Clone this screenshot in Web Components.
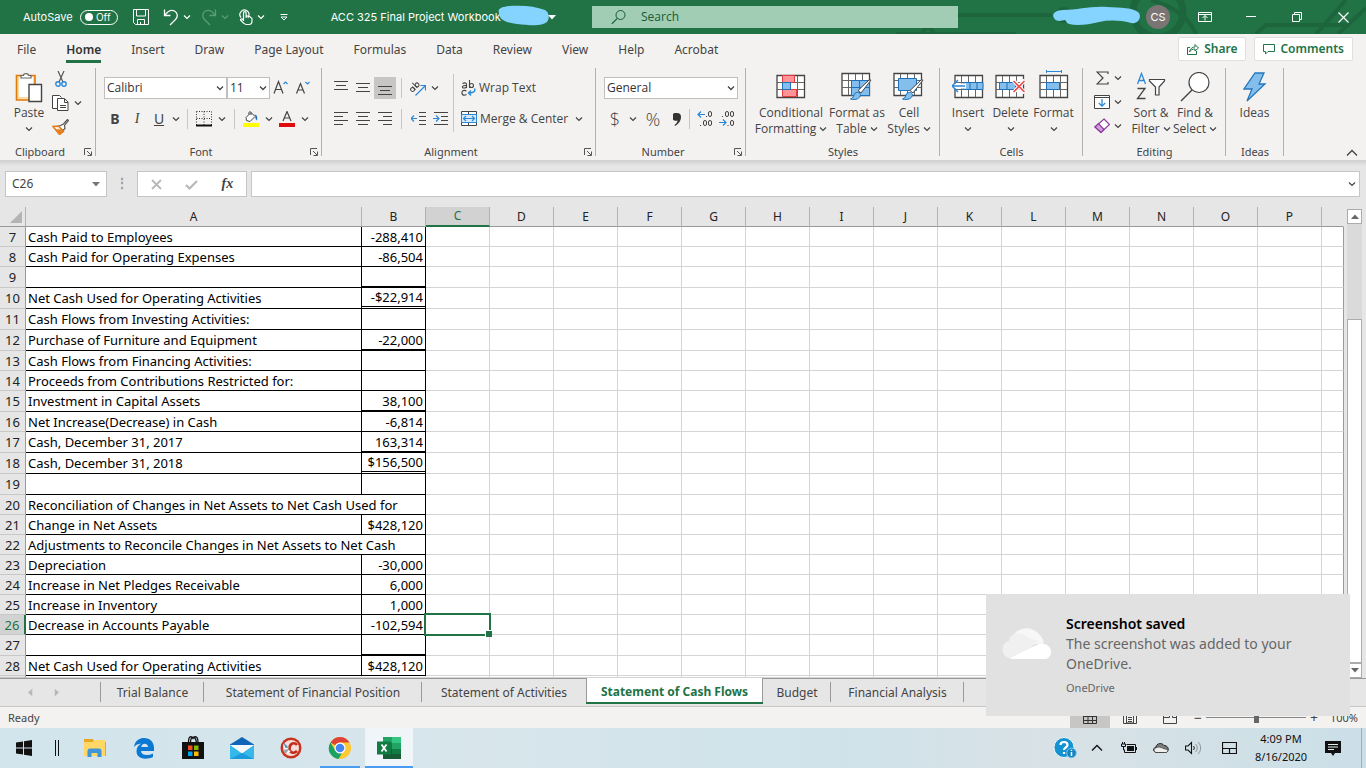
<!DOCTYPE html>
<html lang="en">
<head>
<meta charset="utf-8">
<title>ACC 325 Final Project Workbook - Excel</title>
<style>
html,body{margin:0;height:100%}
body{display:flex;flex-direction:column;min-height:100vh;overflow:hidden;background:#e6e6e6;color:#444;font:12px/16px "Noto Sans","Open Sans",sans-serif}
</style>
</head>
<body>
<excel-titlebar></excel-titlebar>
<excel-menu></excel-menu>
<excel-ribbon></excel-ribbon>
<formula-bar></formula-bar>
<work-sheet></work-sheet>
<sheet-tabs></sheet-tabs>
<status-bar></status-bar>
<task-bar></task-bar>
<toast-card>
  <span slot="title">Screenshot saved</span>
  <span slot="body">The screenshot was added to your OneDrive.</span>
  <span slot="source">OneDrive</span>
</toast-card>
<script>
const K='stroke="#444" fill="none"', B='stroke="#2b88d8" fill="none"';
const lines=(a)=>a.map(([x1,x2,y])=>`<path d="M${x1} ${y}.5H${x2}" ${K}/>`).join('');
const gridBase='<path d="M1 1.5H28.5V23.5H1z" fill="#fff" stroke="#444" stroke-width="1.3"/><path d="M1 8.5H28M1 15.5H28M7.5 2V23M14.500 2V23M21.500 2V23" stroke="#666" fill="none"/>';
const brush='<path d="M30 8L20 21l-3-2.500L28 8z" fill="#fff" stroke="#444"/><path d="M19.500 22.500c0 4-5 6-10 4.500 3-1 3-3 4-5 1.500-2.500 5-2 6 .5z" fill="#83beec" stroke="#1e71b8"/>';
const ICONS={
chev:[8,6,'<path d="M1 1.500l3 3 3-3" fill="none" stroke="currentColor" stroke-width="1.200"/>'],
up:[12,8,'<path d="M1 6.500l5-5 5 5" fill="none" stroke="currentColor" stroke-width="1.300"/>'],
save:[18,18,'<path d="M1.500 1.500h15v15h-13l-2-2zM4.500 2v6h9V2M5.500 16.500v-5h7v5M8.500 16v-2" fill="none" stroke="#fff"/>'],
undo:[18,18,'<path d="M2.500 1.500v6h6M3 7C6 3 9.500 1.500 12.500 3c3.500 2 3.500 6 1 8.500L8 17" fill="none" stroke="#fff" stroke-width="1.300"/>'],
redo:[18,18,'<path d="M15.500 1.500v6h-6M15 7C12 3 8.500 1.500 5.500 3 2 5 2 9 4.500 11.500L10 17" fill="none" stroke="#5c9c78" stroke-width="1.300"/>'],
touch:[16,18,'<path d="M3 9.500a4.500 4.500 0 1 1 7.500-1M5.500 13V5a1.300 1.300 0 0 1 2.600 0v5M8.100 8.500a1.200 1.200 0 0 1 2.200.5 1.200 1.200 0 0 1 2.200.5c1 0 1.500.5 1.500 1.500v2c0 2-1 3.500-3 3.500H8c-2 0-3-2-5.500-4.500 0-1.500 2-1.500 3 .5" fill="none" stroke="#fff" stroke-width="1.200"/>'],
custom:[8,8,'<path d="M.5 1.500h7M1 4l3 3 3-3z" stroke="#fff" fill="none" stroke-width="1"/>'],
tri:[8,5,'<path d="M0 0h8L4 4.500z" fill="currentColor"/>'],
search:[16,16,'<circle cx="9.500" cy="6" r="4.500" fill="none" stroke="#185c37"/><path d="M6.300 9.300L.8 14.800" stroke="#185c37" stroke-width="1.200"/>'],
rdisp:[14,12,'<path d="M.5 1.500h13v9H.5zM.5 3.500h13M7 9.500v-5M4.500 7L7 4.500 9.500 7" fill="none" stroke="#fff"/>'],
min:[10,2,'<path d="M0 .5h10" stroke="#fff"/>'],
restore:[10,10,'<path d="M.5 2.500h7v7h-7zM2.500 2V.5h7v7H8" fill="none" stroke="#fff"/>'],
close:[11,11,'<path d="M.5.5l10 10M10.500.5l-10 10" stroke="#fff" stroke-width="1.200"/>'],
share:[12,12,'<path d="M3 4.500H.5v7h9V8M2.500 9c.5-3.500 3-5 5.500-5V1.500L11.500 5 8 8V6C5.500 6 3.500 7 2.500 9z" fill="none" stroke="#217346"/>'],
comment:[12,12,'<path d="M.5 1.500h11v7H5L2.500 11V8.500h-2z" fill="none" stroke="#217346"/>'],
paste:[28,32,'<path d="M1.500 4.500H20V29H1.500z" fill="#fcdca0" stroke="#df7a0f" stroke-width="1.600"/><path d="M4 6h14v20H4z" fill="#fff"/><path d="M6 7V4.500h2.500C8.500 2 13.500 2 13.500 4.500H16V7z" fill="#fff" stroke="#666" stroke-width="1.200"/><path d="M14 13.500h12.500v17H14z" fill="#fff" stroke="#444" stroke-width="1.400"/>'],
cut:[12,16,'<path d="M3 0l5 11M9 0L4 11" stroke="#555" fill="none" stroke-width="1.200"/><circle cx="3" cy="13" r="2.200" fill="none" stroke="#2b88d8" stroke-width="1.400"/><circle cx="9" cy="13" r="2.200" fill="none" stroke="#2b88d8" stroke-width="1.400"/>'],
copy:[17,16,'<path d="M5.500 13.500h-5V.5h7l2 2" fill="#fff" stroke="#444"/><path d="M5.500 3.500h7l3.500 3.500v8.500H5.500zM12.500 4v3.500H16M8 10.500h6M8 12.500h6" fill="#fff" stroke="#444"/>'],
painter:[17,16,'<path d="M8.500 6.500l3-1.500 4-4.500 1 1-4 5 .5 3-2 2-5-4z" fill="#fff" stroke="#555" stroke-width="1.200"/><path d="M1 7.500l5.500-.5 5 5.500-4 3z" fill="#fff3e0" stroke="#e07a1a" stroke-width="1.500"/><path d="M4 10l5 .5 2.500 2-4 3z" fill="#e8801f"/>'],
launch:[8,8,'<path d="M.5 7V.5H7M3 3l4 4M7.500 3.500v4h-4" fill="none" stroke="#555"/>'],
borders:[16,16,'<path d="M.5.5h15M.5.5v14M15.500.5v14M8 .5v14M.5 7.500h15" stroke="#333" stroke-dasharray="1 1.500" fill="none"/><path d="M0 14.500h16" stroke="#111" stroke-width="2"/>'],
fill:[16,16,'<path d="M3 6.500l5-5 4 4-5 5-3.500-1zM6 3.500C5 1 7 0 8 1.500V4" fill="#fff" stroke="#444"/><path d="M11.500 3.500c3 .5 3 3 2.500 6-1.500-1-2-3-1.500-4z" fill="#1e71b8"/><path d="M0 12h16v4H0z" fill="#ff0"/>'],
fcolor:[16,16,'<path d="M4 10L8 .5 12 10M5.500 7h5" fill="none" stroke="#444" stroke-width="1.200"/><path d="M0 12h16v4H0z" fill="#e00b0b"/>'],
grow:[16,16,'<path d="M1 13.500L5.500 1.500 10 13.500M2.500 9.500h6" fill="none" stroke="#444" stroke-width="1.200"/><path d="M10.500 4l2-2 2 2" '+B+' stroke-width="1.200"/>'],
shrink:[16,16,'<path d="M1.500 13.500L5.500 3.500 9.500 13.500M3 10h5" fill="none" stroke="#444" stroke-width="1.200"/><path d="M10.500 2l2 2 2-2" '+B+' stroke-width="1.200"/>'],
top:[14,16,lines([[0,14,1],[2,12,5],[0,14,9]])],
mid:[14,16,lines([[0,14,3],[2,12,7],[0,14,11]])],
bot:[14,16,lines([[0,14,6],[2,12,10],[0,14,14]])],
left:[14,16,lines([[0,14,1],[0,9,5],[0,14,9],[0,9,13]])],
center:[14,16,lines([[0,14,1],[2,12,5],[0,14,9],[2,12,13]])],
right:[14,16,lines([[0,14,1],[5,14,5],[0,14,9],[5,14,13]])],
orient:[16,16,'<g transform="rotate(-45 5 7)"><ellipse cx="1.500" cy="7" rx="1.800" ry="2" '+K+'/><path d="M3.500 4.800v4.500M6 2v7.300" '+K+'/><ellipse cx="8" cy="7" rx="1.800" ry="2" '+K+'/></g><path d="M5.500 15.500L15 6M10.500 5.500h5v5" '+B+' stroke-width="1.200"/>'],
outdent:[15,16,lines([[8,15,1],[8,15,5],[8,15,9],[8,15,13]])+'<path d="M0 7.500h6M3 4.500l-3 3 3 3" '+B+' stroke-width="1.200"/>'],
indent:[15,16,lines([[1,15,1],[8,15,5],[8,15,9],[1,15,13]])+'<path d="M0 7.500h6M3 4.500l3 3-3 3" '+B+' stroke-width="1.200"/>'],
wrap:[15,16,'<g '+K+' stroke-width="1.100"><path d="M1.500 3.500c3-1.500 4 0 4 1v3.500M5.500 5.500c-5-.3-5 2.500-2.500 2.500 1.500 0 2.500-1 2.500-1.500M8.500 0v8"/><circle cx="10.500" cy="5.500" r="2"/><path d="M5.500 11c-3-1.500-5 0-4.500 2.500.5 2 2.500 2 4.500 1"/></g><path d="M13.500 8.500c1.500 3-1.500 4.500-6 4.500M10 10.500L7.500 13l2.500 2.500" '+B+' stroke-width="1.400"/>'],
merge:[16,16,'<path d="M.5.5h15v14H.5zM7.500.5v3M7.500 12v3" fill="#fff" stroke="#444"/><path d="M.5 3.500h15v8H.5z" fill="#d8ebfa" stroke="#2b88d8"/><path d="M2.500 7.500h11M5 5L2.500 7.500 5 10M11 5l2.500 2.500L11 10" '+B+' stroke-width="1.200"/>'],
cond:[30,26,gridBase+'<path d="M6.500 1.500h12v7h-12zM6.500 15.500h14v7h-14z" fill="#ff9596" stroke="#e03a3e"/><path d="M6.500 8.500h8v7h-8z" fill="#83beec" stroke="#1e71b8"/>'],
table:[32,30,gridBase+'<path d="M10.500 8.500h18v15h-18z" fill="#83beec" stroke="#1e71b8"/><path d="M10 15.500h18M18.500 8v15" stroke="#1e71b8"/>'+brush],
cell:[32,30,gridBase+'<path d="M5.500 6.500h18v12h-18z" fill="#83beec" stroke="#1e71b8"/>'+brush],
insert:[32,26,'<g transform="translate(2)">'+gridBase+'</g><path d="M11 8.500h20v7H11zM18 8v7M25 8v7" fill="#83beec" stroke="#1e71b8"/><path d="M0 12h14" stroke="#fff" stroke-width="5"/><path d="M0 12h13M6 6l-6 6 6 6" '+B+' stroke-width="1.500"/>'],
del:[32,26,gridBase+'<path d="M4.500 8.500h16v7h-16zM12 8v7" fill="#83beec" stroke="#1e71b8"/><path d="M18 6l12 13M30 6L18 19" stroke="#fff" stroke-width="4"/><path d="M18.500 7l11 11M29.500 7l-11 11" stroke="#f04a4a" stroke-width="1.600"/>'],
format:[30,34,'<g transform="translate(0 4)">'+gridBase+'<path d="M7.500 8.500h13v7h-13z" fill="#83beec" stroke="#1e71b8"/></g><path d="M7.500 0v3M22.500 0v3M7 1.500h16" stroke="#2b88d8" fill="none"/>'],
sum:[13,14,'<path d="M12 3V1H1l6 6-6 6h11v-2" '+K+' stroke-width="1.200"/>'],
filldown:[16,14,'<path d="M.5.5h15v13H.5zM.5 2.500h15" fill="#fff" stroke="#444"/><path d="M8 4v7M4.800 8L8 11.200 11.200 8" '+B+' stroke-width="1.300"/>'],
eraser:[16,16,'<path d="M10 1l5.500 5.500L7 14.500 1 9z" fill="#fff" stroke="#8a3a9a" stroke-width="1.200"/><path d="M1 9l3.500-3.500L10 11.500l-3 3z" fill="#d59de0" stroke="#8a3a9a" stroke-width="1.200"/>'],
sort:[30,30,'<path d="M1.500 12L5.500 1.500 9.500 12M3 8.500h5" '+B+' stroke-width="1.300"/><path d="M1.500 16.500h7.500L1.500 26.500h8" '+K+' stroke-width="1.300"/><path d="M13.500 7.500h15v1.500l-5.500 6v8h-3.500v-8l-6-6z" fill="#fff" stroke="#444" stroke-width="1.200"/>'],
find:[30,30,'<circle cx="19" cy="10.500" r="10" fill="#fff" stroke="#444" stroke-width="1.200"/><path d="M12 18L1 29" stroke="#444" stroke-width="1.400"/>'],
ideas:[24,30,'<path d="M12 1h9l-5 11h6L4 29l5-12H1z" fill="#83beec" stroke="#2477bd" stroke-width="1.300"/>'],
x:[11,11,'<path d="M1 1l9 9M10 1L1 10" stroke="#b8b8b8" stroke-width="1.800"/>'],
check:[13,11,'<path d="M1 6l3.500 3.500L12 2" stroke="#b8b8b8" fill="none" stroke-width="2.200"/>'],
normal:[14,12,'<path d="M.5.5h13v11H.5zM.5 4.500h13M.5 8.500h13M5 .5v11M9.500.5v11" fill="none" stroke="#333"/>'],
layout:[14,12,'<path d="M.5.5h13v11H.5zM3.500 3h7v8h-7zM5 5.500h4M5 7.500h4M5 9.500h4" fill="none" stroke="#444"/>'],
breaks:[14,12,'<path d="M.5.5h13v11H.5zM.5 5.500h6v-5M9.500 5.500h4M9.500 5.500v-5" fill="none" stroke="#444"/>'],
cloudBig:[50,34,'<path d="M10 14C11 3 27-3 37 8c3 3 4 5 5 9l-30 4z" fill="#f7f7f7"/><path d="M10 33C-1 32-3 18 7 15c1-9 13-10 18-4l11 4-20 18z" fill="#f0f0f0"/><path d="M8 32c5-2 20-10 27-13 6-4 15 1 14 8-1 5-4 6-7 6H12c-2 0-3-.5-4-1z" fill="#fff"/>'],
win:[16,16,'<path d="M0 2.500l7-1v6H0zM8 1.300L16 0v7.500H8zM0 8.500h7v6l-7-1zM8 8.500h8V16l-8-1.300z" fill="#111"/>'],
cortana:[4,16,'<path d="M.5 0v16M3.500 0v16" stroke="#111"/>'],
folder:[24,22,'<path d="M1 2h9l1 3h12v14H1z" fill="#e5a823"/><path d="M1 5h9l2-2h10v16H1z" fill="#ffd767"/><path d="M4.500 20v-6c0-1.500 1-2.500 2.500-2.500h9c1.500 0 2.500 1 2.500 2.500v6h-4v-4h-6v4z" fill="#3f95d8"/>'],
edge:[22,22,'<path d="M1 10C2 3.500 6.500 1 11 1c6 0 10 4 10 10v3H8c.3 3 3 4 6 4 2 0 4-.5 6-1.500V20c-2 1-5 1.700-7.500 1.700C6 21.700 3.500 18 3.500 14c0-3.500 2-6 5-7.500C5 6.800 2.500 8 1 10zM8.200 10H15c0-2-1.300-3.300-3.300-3.300S8.500 8 8.200 10z" fill="#0b78d4" fill-rule="evenodd"/>'],
store:[24,24,'<path d="M1 6h22v17H1z" fill="#111"/><path d="M7.500 6.500c0-7 3-6.500 4.500-4 1.500-2.500 5-3 5 4M9.500 6.500c0-7 5-7 6 0" fill="none" stroke="#111" stroke-width="1.300"/><path d="M7 9.500h4.500V14H7z" fill="#f25022"/><path d="M13 9.500h4.500V14H13z" fill="#7fba00"/><path d="M7 15.500h4.500V20H7z" fill="#00a4ef"/><path d="M13 15.500h4.500V20H13z" fill="#ffb900"/>'],
mail:[24,24,'<path d="M0 8.500L12 1l12 7.500V23H0z" fill="#0f66b8"/><path d="M0 9h24L12 18z" fill="#e9f3f9"/><path d="M0 9l12 8.500L24 9v14H0z" fill="#35b9ea"/><path d="M0 23l12-6 12 6z" fill="#1c9ade"/><path d="M0 9h24L12 17z" fill="#f4f9fc"/>'],
cc:[22,22,'<circle cx="11" cy="11" r="10.500" fill="#c8321f"/><circle cx="11" cy="11" r="8" fill="#f6ded8"/><path d="M17 8c-2.500-3-7-2-7.500 3s4.500 6 7.500 3" fill="none" stroke="#c22c1c" stroke-width="2.600"/><path d="M3 7l6 4-4 1 6 2-5 3z" fill="#fff"/><path d="M3 5l5.500 5.500-3 .5z" fill="#4a90c8"/><path d="M3 13l6-1-3 5z" fill="#9aa7b0"/>'],
chrome:[24,24,'<circle cx="12" cy="12" r="11" fill="#fcc934"/><path d="M12 12L2.500 6.500C5 2.800 8.500 1 12 1c4 0 7.500 2 9.500 5.500H12z" fill="#dc4437"/><path d="M2.500 6.500C0 10.500.3 15 2.500 18c2 3 5 4.700 8 5l5-8.500-8.500-.5z" fill="#1aa260"/><circle cx="12" cy="12" r="5.500" fill="#fff"/><circle cx="12" cy="12" r="4.300" fill="#4285f4"/>'],
excel:[24,24,'<path d="M6 1h18v22H6z" fill="#21a366"/><path d="M15 1h9v6h-9z" fill="#33c481"/><path d="M6 7h9v6H6z" fill="#107c41"/><path d="M6 13h18v10H6z" fill="#185c37"/><path d="M15 13h9v5h-9z" fill="#107c41"/><path d="M0 5.500h14v13H0z" fill="#107c41"/><path d="M4.500 8.500l5 7M9.500 8.500l-5 7" stroke="#fff" stroke-width="1.800"/>'],
help:[24,22,'<circle cx="11" cy="10.500" r="10" fill="#1493d0" stroke="#e6f3f9"/><path d="M7.500 8c0-4 7-4 7 0 0 2.500-3.500 2.500-3.500 5M11 15v2" fill="none" stroke="#fff" stroke-width="2.200"/><circle cx="18.500" cy="16" r="4.800" fill="#1484c2" stroke="#7fc6e8"/><path d="M18.500 15v4M18.500 12.800v1.200" stroke="#fff" stroke-width="1.500"/>'],
battery:[16,12,'<path d="M5.500 2.500h9v8h-11V8" fill="none" stroke="#111"/><path d="M6 4h7v5H6z" fill="#111"/><path d="M15 5h1v3h-1z" fill="#111"/><path d="M.5 2h4v2.500h-4zM1.500 0v2M3.500 0v2M2.500 4.500V8H4" fill="none" stroke="#111"/>'],
cloud:[16,12,'<path d="M4 10.500C0 10.500-.5 6 3 5c.5-3.500 5.500-5 8-1.500 3 0 5 2.500 4 5-.5 1.500-1.500 2-2.500 2z" fill="#7d7d7d" stroke="#222"/><path d="M4 10.500c-3 0-4-3-1.500-4.500 3-1.500 5-1 8 .5 2 .5 4 1 4.500 1.500-.5 2-1 2.500-2.500 2.500z" fill="#eee" stroke="#222" stroke-width=".6"/>'],
sound:[17,14,'<path d="M.5 5h2.500l3.500-3.500v11L3 9H.5z" fill="none" stroke="#111" stroke-width="1.100"/><path d="M8.500 5c1 1.200 1 2.800 0 4" fill="none" stroke="#222"/><path d="M10.500 3c2.300 2.200 2.300 5.800 0 8M13 1c3.500 3.500 3.500 8.500 0 12" fill="none" stroke="#8a9296"/>'],
pad:[15,12,'<path d="M.5.5h14v11H.5zM.5 6.500h14M7.500 6.500v5" fill="none" stroke="#111" stroke-width="1.200"/>'],
note:[16,16,'<path d="M0 1h16v12h-6l-2 3-2-3H0z" fill="#111"/><path d="M3 4.500h10M3 7h10M3 9.500h6" stroke="#e5eef2"/>'],
selall:[12,12,'<path d="M12 0v12H0z" fill="#b4b4b4"/>']
};
const RESET=`*,:host{box-sizing:border-box}button,input,select{font:inherit;color:inherit;margin:0;padding:0;border:0;background:none;border-radius:0}button{display:flex;align-items:center;justify-content:center}`;
const define=(tag,css,html)=>customElements.define(tag,class extends HTMLElement{
  constructor(){super();this.attachShadow({mode:'open'}).innerHTML=`<style>${RESET}${css}</style>${typeof html==='function'?html(this):html}`}
});
const ic=n=>`<ui-icon name="${n}"></ui-icon>`;
const btn=(n,label,cls='')=>`<button class="${cls}" aria-label="${label}">${ic(n)}</button>`;

customElements.define('ui-icon',class extends HTMLElement{
  connectedCallback(){
    if(this.shadowRoot)return;
    const [w,h,body]=ICONS[this.getAttribute('name')];
    this.attachShadow({mode:'open'}).innerHTML=`<style>:host{display:block;flex:none}svg{display:block}</style><svg width="${w}" height="${h}" viewBox="0 0 ${w} ${h}" aria-hidden="true">${body}</svg>`;
  }
});

define('excel-titlebar',`
:host{position:relative;display:grid;grid-template-columns:592fr 366fr 408fr;height:34px;flex:none;background:#217346;color:#fff;font:11px/16px Inter,"Noto Sans",sans-serif}
.art{position:absolute;right:0;top:0}
.left,.right{position:relative;display:flex;align-items:center;min-width:0}
.left{padding-left:23px;white-space:nowrap}
.toggle{width:38px;height:15px;margin:0 14px 0 7px;border:1px solid #fff;border-radius:8px;font-size:10px;line-height:12px;justify-content:space-between;padding:0 6px 0 4px}
.toggle i{width:8px;height:8px;border-radius:50%;background:#fff}
.save{margin-right:12px}
.q{gap:3px;margin-right:9px}
.dim{color:#5c9c78}
.more{margin-left:6px}
.file{position:relative;display:flex;align-items:center;gap:47px;margin-left:43px}
.file svg{position:absolute;right:3px;top:-4px}
.search{position:relative;display:flex;align-items:center;margin:6px 0;background:#a0cdb4;padding-left:19px;gap:14px}
.search input{flex:1;min-width:0;outline:0;font:12px/16px "Open Sans",sans-serif}
.search input::placeholder{color:#185c37;opacity:1}
.right{justify-content:flex-end}
.who{margin-right:4px}
.av{width:24px;height:24px;border-radius:50%;background:#7a7574;font-size:11px;line-height:24px;text-align:center;margin-right:12px}
.right button{width:46px;height:34px}
`,`
<svg class="art" width="500" height="34" fill="none" stroke="#1d653d" stroke-width="4" aria-hidden="true"><path d="M90 15H186M30 34h120M330 34q-10 -24 -45 -34M480 0L450 34M500 8L472 34M480 25H400L390 34"/><circle cx="292" cy="12" r="25" stroke-width="7"/><circle cx="62" cy="33" r="5"/><circle cx="198" cy="15" r="6"/></svg>
<div class="left"><span>AutoSave</span><button class="toggle" role="switch" aria-checked="false" aria-label="AutoSave"><i></i>Off</button>
${btn('save','Save','save')}
<button class="q" aria-label="Undo">${ic('undo')}${ic('chev')}</button>
<button class="q dim" aria-label="Redo">${ic('redo')}${ic('chev')}</button>
<button class="q" aria-label="Touch mode">${ic('touch')}${ic('chev')}</button>
${btn('custom','Customize','more')}
<span class="file">ACC 325 Final Project Workbook<svg width="58" height="24" aria-hidden="true"><path d="M4 8C2 3 8 2 14 1c14-1 26 0 36 4 4 2 5 8 2 12-6 5-18 3-30 2C14 18 4 16 4 8z" fill="#84d4ff"/></svg>${ic('tri')}</span></div>
<label class="search">${ic('search')}<input type="search" placeholder="Search" aria-label="Search"></label>
<div class="right"><svg class="who" width="91" height="24" aria-hidden="true"><path d="M3 13C0 8 6 5 12 5c16 0 26-4 44-3 14 1 26 0 32 6 3 5-2 12-8 10-12-3-22-3-32-1-12 3-22 4-30 2-3-1-3-4-4-4-4 1-9 2-11-2z" fill="#84d4ff"/></svg><span class="av">CS</span>
${btn('rdisp','Ribbon display options')}${btn('min','Minimize')}${btn('restore','Restore')}${btn('close','Close')}</div>`);

define('excel-menu',`
:host{display:flex;align-items:center;height:32px;flex:none;background:#f3f2f1;padding:0 13px 0 17px}
nav{display:flex;gap:30px;flex:1}
a{color:inherit;text-decoration:none;line-height:20px;border-bottom:3px solid transparent;margin-top:2px;white-space:nowrap}
a.on{font-weight:600;color:#333;border-color:#217346}
button{background:#fff;border:1px solid #e1dfdd;border-radius:2px;height:24px;padding:0 8px;gap:5px;color:#217346;font-weight:600;margin:0 0 2px 8px}
`,`<nav>${['File','Home','Insert','Draw','Page Layout','Formulas','Data','Review','View','Help','Acrobat'].map(t=>`<a href="#"${t==='Home'?' class="on"':''}>${t}</a>`).join('')}</nav>
<button>${ic('share')}Share</button><button>${ic('comment')}Comments</button>`);

define('ribbon-group',`
:host{position:relative;display:flex;flex-direction:column;flex:none;height:94px;background:linear-gradient(#b3b0ad,#b3b0ad) right 2px/1px 88px no-repeat}
.c{display:flex;height:78px}
.l{text-align:center;font-size:11px;line-height:16px}
:host([more]) .l{padding-right:16px}
button{position:absolute;right:4px;bottom:4px}
`,el=>`<div class="c"><slot></slot></div><div class="l">${el.getAttribute('label')}</div>${el.hasAttribute('more')?btn('launch',el.getAttribute('label')+' settings'):''}`);

define('big-button',`
:host{display:block;flex:none}
button{flex-direction:column;justify-content:flex-start;width:100%;line-height:16px;white-space:nowrap;font-family:"Open Sans",sans-serif}
.i{height:39px;display:flex;align-items:center;padding-top:3px}
.t{display:flex;align-items:center;gap:3px;height:16px}
`,el=>{const [a,b]=el.getAttribute('text').split('|');
return `<button><span class="i">${ic(el.getAttribute('icon'))}</span><span>${a}</span>${el.hasAttribute('drop')?`<span class="t">${b||''}${ic('chev')}</span>`:''}</button>`});

define('excel-ribbon',`
:host{position:relative;display:flex;height:94px;flex:none;background:#f3f2f1}
.col{display:flex;flex-direction:column}
.row{display:flex;align-items:center;height:22px}
.row button{width:22px;height:22px;flex:none}
.row .d{width:12px}.row .m{width:14px}
.rows{padding:11px 0 0 8px;gap:9px}
.sep{width:1px;height:20px;background:#c8c6c4;margin:0 5px;flex:none}
.on{background:#c8c6c4}
select{appearance:none;height:22px;border:1px solid #c1bfbd;background:#fff url("data:image/svg+xml,%3Csvg xmlns='http://www.w3.org/2000/svg' width='8' height='6'%3E%3Cpath d='M1 1.500l3 3 3-3' fill='none' stroke='%23444' stroke-width='1.300'/%3E%3C/svg%3E") right 2px center no-repeat;padding-left:2px;color:#333;font-family:"Open Sans",sans-serif}
.g{font-size:14px}.big{font-size:18px;font-family:"Open Sans",sans-serif;font-weight:300}
.clip{padding:1px 0 0 6px}
.clip div{display:flex;gap:5px}
.clip button{height:24px}.clip button:first-child{width:17px}
.edit{padding-left:11px;width:47px;gap:1px;align-items:flex-start}
.edit button{height:23px;gap:4px}
.edit button:first-child{padding-left:2px;gap:5px}
.row .txt{width:auto;gap:3px;white-space:nowrap;font-family:"Open Sans",sans-serif}
svg{display:block}
.fold{position:absolute;right:8px;bottom:3px}
`,`
<ribbon-group label="Clipboard" more style="width:96px">
 <big-button icon="paste" text="Paste" drop style="width:34px;margin-left:12px"></big-button>
 <div class="col clip"><div>${btn('cut','Cut')}</div><div>${btn('copy','Copy')}${btn('chev','Copy options')}</div><div>${btn('painter','Format painter')}</div></div>
</ribbon-group>
<ribbon-group label="Font" more style="width:226px"><div class="col rows">
 <div class="row"><select aria-label="Font" style="width:123px"><option>Calibri</option></select><select aria-label="Font size" style="width:43px"><option>11</option></select>${btn('grow','Increase font size')}${btn('shrink','Decrease font size')}</div>
 <div class="row"><button class="g"><b>B</b></button><button class="g"><i style="font-family:'Liberation Serif',serif">I</i></button><button class="g"><u>U</u></button>${btn('chev','Underline options','d')}<span class="sep"></span>${btn('borders','Borders')}${btn('chev','Border options','m')}<span class="sep"></span>${btn('fill','Fill color')}${btn('chev','Fill options','m')}${btn('fcolor','Font color')}${btn('chev','Font color options','m')}</div>
</div></ribbon-group>
<ribbon-group label="Alignment" more style="width:274px"><div class="col rows">
 <div class="row">${btn('top','Top align')}${btn('mid','Middle align')}${btn('bot','Bottom align','on')}<span class="sep"></span>${btn('orient','Orientation')}${btn('chev','Orientation options','d')}</div>
 <div class="row">${btn('left','Align left')}${btn('center','Center')}${btn('right','Align right')}<span class="sep"></span>${btn('outdent','Decrease indent')}${btn('indent','Increase indent')}</div></div>
 <span class="sep" style="height:58px;margin:8px 0 0 2px"></span>
 <div class="col rows" style="padding-left:7px"><div class="row"><button class="txt">${ic('wrap')}Wrap Text</button></div><div class="row"><button class="txt">${ic('merge')}Merge &amp; Center</button>${btn('chev','Merge options')}</div></div>
</ribbon-group>
<ribbon-group label="Number" more style="width:150px"><div class="col rows">
 <div class="row"><select aria-label="Number format" style="width:134px"><option>General</option></select></div>
 <div class="row"><button class="big">$</button>${btn('chev','Currency options','m')}<button class="big" style="width:26px">%</button><button aria-label="Comma style"><svg width="8" height="13" aria-hidden="true"><path d="M4 0a4 4 0 0 1 4 4c0 4-2.500 7-6 9l-.5-1C3.500 10.500 4.500 9 4.500 7.500A4 4 0 1 1 4 0z" fill="#333"/></svg></button><span class="sep" style="margin:0 4px 0 1px"></span>
 <button aria-label="Increase decimal"><svg width="16" height="18" fill="none"><path d="M1 4.500h7M4 1.500l-3 3 3 3" stroke="#2b88d8" stroke-width="1.200"/><g stroke="#444"><rect x="11.500" y="1.500" width="3" height="5" rx="1.500"/><rect x="6.500" y="10.500" width="3" height="5" rx="1.500"/><rect x="11.500" y="10.500" width="3" height="5" rx="1.500"/><path d="M9 6.500h1M3 15.500h1"/></g></svg></button>
 <button aria-label="Decrease decimal"><svg width="16" height="18" fill="none"><path d="M0 12.500h7M4 9.500l3 3-3 3" stroke="#2b88d8" stroke-width="1.200"/><g stroke="#444"><rect x="6.500" y="1.500" width="3" height="5" rx="1.500"/><rect x="11.500" y="1.500" width="3" height="5" rx="1.500"/><rect x="11.500" y="10.500" width="3" height="5" rx="1.500"/><path d="M3 6.500h1M8.500 15.500h1"/></g></svg></button></div>
</div></ribbon-group>
<ribbon-group label="Styles" style="width:194px">
 <big-button icon="cond" text="Conditional|Formatting" drop style="width:74px;margin-left:8px"></big-button><big-button icon="table" text="Format as|Table" drop style="width:58px"></big-button><big-button icon="cell" text="Cell|Styles" drop style="width:46px"></big-button>
</ribbon-group>
<ribbon-group label="Cells" style="width:143px">
 <big-button icon="insert" text="Insert" drop style="width:42px;margin-left:7px"></big-button><big-button icon="del" text="Delete" drop style="width:43px"></big-button><big-button icon="format" text="Format" drop style="width:43px"></big-button>
</ribbon-group>
<ribbon-group label="Editing" style="width:143px">
 <div class="col edit"><button aria-label="AutoSum">${ic('sum')}${ic('chev')}</button><button aria-label="Fill">${ic('filldown')}${ic('chev')}</button><button aria-label="Clear">${ic('eraser')}${ic('chev')}</button></div>
 <big-button icon="sort" text="Sort &amp;|Filter" drop style="width:42px"></big-button><big-button icon="find" text="Find &amp;|Select" drop style="width:46px"></big-button>
</ribbon-group>
<ribbon-group label="Ideas" style="width:58px"><big-button icon="ideas" text="Ideas" style="width:57px"></big-button></ribbon-group>
<button class="fold" aria-label="Collapse ribbon">${ic('up')}</button>`);

define('formula-bar',`
:host{display:flex;height:47px;flex:none;padding:11px 6px 10px 5px;background:linear-gradient(#cfcfcf,#e6e6e6 6px)}
.b{display:flex;align-items:center;height:26px;background:#fff;border:1px solid #c6c6c6}
.n{width:102px;padding:0 6px}.n input{flex:1;min-width:0;outline:0}
.n ui-icon{color:#777}
.dots{width:30px;text-align:center;line-height:24px;color:#999;font-weight:700}
.f{width:110px;justify-content:space-around;padding:0 1px}
.f button{width:34px;height:24px}.f i{font:italic 600 14px/20px "Liberation Serif",serif;color:#444}
.v{flex:1;margin-left:4px;padding-right:3px}.v input{flex:1;min-width:0;outline:0}
`,`<div class="b n"><input value="C26" aria-label="Name box">${ic('tri')}</div><div class="dots">⋮</div>
<div class="b f">${btn('x','Cancel')}${btn('check','Enter')}<button aria-label="Insert function"><i>fx</i></button></div>
<div class="b v"><input aria-label="Formula">${ic('chev')}</div>`);

const ROWS=[[7,20,'Cash Paid to Employees','-288,410'],[8,20,'Cash Paid for Operating Expenses','-86,504'],[9,21,'','','thick'],[10,21,'Net Cash Used for Operating Activities','-$22,914','dbl'],[11,21,'Cash Flows from Investing Activities:',''],[12,21,'Purchase of Furniture and Equipment','-22,000','thick'],[13,20,'Cash Flows from Financing Activities:',''],[14,20,'Proceeds from Contributions Restricted for:',''],[15,21,'Investment in Capital Assets','38,100','thick'],[16,20,'Net Increase(Decrease) in Cash','-6,814'],[17,21,'Cash, December 31, 2017','163,314','thick'],[18,21,'Cash, December 31, 2018','$156,500','dbl'],[19,21,'',''],[20,20,'Reconciliation of Changes in Net Assets to Net Cash Used for',null],[21,20,'Change in Net Assets','$428,120'],[22,20,'Adjustments to Reconcile Changes in Net Assets to Net Cash',null],[23,20,'Depreciation','-30,000'],[24,20,'Increase in Net Pledges Receivable','6,000'],[25,20,'Increase in Inventory','1,000'],[26,20,'Decrease in Accounts Payable','-102,594'],[27,21,'','','thick'],[28,20,'Net Cash Used for Operating Activities','$428,120']];
const COLS='CDEFGHIJKLMNOP'.split('');
define('work-sheet',`
:host{display:flex;flex:1 1 0;min-height:0;overflow:hidden}
.w{flex:1;min-width:0;overflow:hidden}
table{width:100%;height:100%;table-layout:fixed;border-collapse:separate;border-spacing:0;background:#fff;color:#000;font-size:13px;line-height:16px}
td,th{padding:0;white-space:nowrap;font-weight:400;border-right:1px solid #d4d4d4;border-bottom:1px solid #d4d4d4}
thead th{height:20px;background:#e6e6e6;border-color:#b1b1b1;border-bottom-color:#999;font-size:12px;color:#222}
thead th:last-child{border-right-color:#e6e6e6}
thead th.on{background:#d2d2d2;color:#217346;border-bottom:2px solid #217346}
.corner ui-icon{margin-left:10px}
tbody th{background:#e6e6e6;border-right-color:#999;border-bottom-color:#c8c8c8;color:#222;text-align:center}
tbody th.on{background:#d2d2d2;color:#217346;border-right:2px solid #217346}
td:last-child{border-right-color:#999}
.a{padding-left:2px;border-color:#000}
.b{padding-right:2px;text-align:right;border-color:#000}
.thick{border-bottom-width:2px}.dbl{border-bottom:3px double #000}
.sel{position:relative}
.sel i{position:absolute;inset:-2px;border:2px solid #217346}
.sel i::after{content:"";position:absolute;right:-3px;bottom:-3px;width:6px;height:6px;background:#217346;border:solid #fff;border-width:1px 0 0 1px}
.bar{width:15px;margin:2px 4px 0 3px;display:flex;flex-direction:column;background:#dadada}
.bar button{height:15px;flex:none;background:#fff;border:1px solid #ababab;color:#666}
.up ui-icon{transform:rotate(180deg)}
.gap{flex:95 0 0}
.th{flex:344 0 0;background:#fff;border:1px solid #ababab}
`,`<div class="w"><table><colgroup><col style="width:26px"><col style="width:336px"><col style="width:64px">${COLS.map(()=>'<col style="width:64px">').join('')}<col></colgroup>
<thead><tr><th class="corner">${ic('selall')}</th>${['A','B',...COLS,''].map(c=>`<th${c==='C'?' class="on"':''}>${c}</th>`).join('')}</tr></thead>
<tbody>${ROWS.map(([n,h,a,b,k])=>`<tr style="height:${h}px"><th${n===26?' class="on"':''}>${n}</th>${b===null?`<td class="a" colspan="2">${a}</td>`:`<td class="a">${a}</td><td class="b ${k||''}">${b}</td>`}${COLS.map(c=>n===26&&c==='C'?'<td class="sel"><i></i></td>':'<td></td>').join('')}<td></td></tr>`).join('')}
<tr><th></th>${'<td></td>'.repeat(17)}</tr></tbody></table></div>
<div class="bar"><button class="up" aria-label="Scroll up">${ic('tri')}</button><span class="gap"></span><span class="th"></span><button aria-label="Scroll down">${ic('tri')}</button></div>`);

define('sheet-tabs',`
:host{display:flex;height:29px;flex:none;background:#e6e6e6;border-top:1px solid #999;border-bottom:1px solid #c6c6c6}
.nav{width:101px;display:flex;align-items:center;gap:19px;padding-left:26px;background:linear-gradient(#999,#999) right 3px/1px 20px no-repeat;color:#b8b8b8}
.nav ui-icon:first-child{transform:rotate(90deg)}.nav ui-icon{transform:rotate(-90deg)}
button{height:27px;background:linear-gradient(#999,#999) right 3px/1px 20px no-repeat;white-space:nowrap}
.on{height:24px;margin-top:-1px;padding-top:3px;background:#fff;color:#217346;font-weight:700;border:solid #999;border-width:0 1px;box-shadow:0 2px #217346}
.pre{background:none}
`,`<div class="nav">${ic('tri')}${ic('tri')}</div>${[['Trial Balance',103],['Statement of Financial Position',218],['Statement of Activities',164],['Statement of Cash Flows',177],['Budget',68],['Financial Analysis',133]].map(([t,w])=>`<button class="${w===177?'on':w===164?'pre':''}" style="width:${w}px">${t}</button>`).join('')}`);

define('status-bar',`
:host{display:flex;align-items:center;height:21px;flex:none;background:#f3f2f1;padding:0 8px;font-size:11px}
span.r{flex:1}
.v{width:40px;height:21px}.on{background:#c8c6c4}
.z{width:16px;height:21px;font-size:14px}
input{appearance:none;width:100px;height:11px;background:linear-gradient(#8a8886,#8a8886) 0 5px/100% 1px no-repeat}
input::-webkit-slider-thumb{appearance:none;width:5px;height:11px;background:#666}
.p{width:34px;text-align:right;margin-left:2px}
`,`<span class="r">Ready</span>${btn('normal','Normal view','v on')}${btn('layout','Page layout','v')}${btn('breaks','Page breaks','v')}<button class="z" aria-label="Zoom out">−</button><input type="range" aria-label="Zoom" min="0" max="100" value="50"><button class="z" aria-label="Zoom in">+</button><span class="p">100%</span>`);

define('task-bar',`
:host{display:flex;height:40px;flex:none;background:linear-gradient(90deg,#d2e4ec,#d8e6ec 35%,#cfe2ea 62%,#d9e2e6 76%,#cbdfe8);color:#111;font-size:11px}
button{width:48px;height:40px;flex:none}
.l{display:flex;flex:1;gap:1px}
.c{width:15px;margin-right:6px}
.run{background:linear-gradient(#4a9cf0,#4a9cf0) center bottom/40px 2px no-repeat}
.act{background:linear-gradient(#4a9cf0,#4a9cf0) center bottom/48px 2px no-repeat,#eff5f8}
.r{display:flex}.r button{width:32px}.r .w{width:40px}
.r .clk{width:64px;flex-direction:column;line-height:18px}
.end{width:5px;margin-left:8px;border-left:1px solid #9fb0b8}
`,`<div class="l">${btn('win','Start')}${btn('cortana','Task view','c')}${btn('folder','File Explorer')}${btn('edge','Edge')}${btn('store','Store')}${btn('mail','Mail')}${btn('cc','CCleaner')}${btn('chrome','Chrome','run')}${btn('excel','Excel','act')}</div>
<div class="r">${btn('help','Help')}${btn('up','Hidden icons')}${btn('battery','Battery')}${btn('cloud','OneDrive')}${btn('sound','Volume')}${btn('pad','Touchpad','w')}<button class="clk"><span>4:09 PM</span><span>8/16/2020</span></button>${btn('note','Notifications','w')}<span class="end"></span></div>`);

define('toast-card',`
:host{position:fixed;right:16px;bottom:52px;width:364px;display:flex;padding:20px 40px 20px 16px;gap:14px;background:#e2e1e1;color:#666;font-size:14px;line-height:20px}
ui-icon{margin-top:12px}
.t{color:#000;font-weight:600}
.s{font-size:11px;line-height:16px;margin-top:6px}
`,`${ic('cloudBig')}<div><div class="t"><slot name="title"></slot></div><div><slot name="body"></slot></div><div class="s"><slot name="source"></slot></div></div>`);
</script>
</body>
</html>
